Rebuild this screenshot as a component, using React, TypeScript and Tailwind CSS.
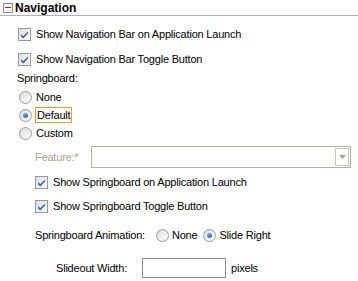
import React from "react";

function Check() {
  return (
    <div className="w-[13px] h-[13px] shrink-0 border border-[#8c9aa8] bg-gradient-to-br from-[#dcdcd7] to-white flex items-center justify-center">
      <svg width="9" height="9" viewBox="0 0 9 9">
        <path d="M1 4 L3.2 6.2 L8 1.4 L8 3.6 L3.2 8.4 L1 6.2 Z" fill="#2f5fc4" />
      </svg>
    </div>
  );
}

function Radio({ on }: { on?: boolean }) {
  return (
    <div className="w-[13px] h-[13px] shrink-0 rounded-full border border-[#9a9a9a] bg-gradient-to-br from-[#dcdcd7] to-white flex items-center justify-center">
      {on && (
        <div className="w-[5px] h-[5px] rounded-full bg-gradient-to-br from-[#7fb0f0] to-[#1f56c8]" />
      )}
    </div>
  );
}

export default function App() {
  return (
    <div
      className="w-[358px] h-[281px] bg-white text-black text-[11px] leading-[14px] tracking-[-0.2px] overflow-hidden"
      style={{ fontFamily: '"Liberation Sans", Arial, sans-serif' }}
    >
      {/* header */}
      <div className="h-[16px] border-b border-[#b0b0bc] flex items-center pl-[3px] tracking-normal">
        <div className="w-[10px] h-[10px] border border-[#8c8c8c] flex items-center justify-center bg-white">
          <div className="w-[6px] h-px bg-[#444]" />
        </div>
        <span className="ml-[2px] font-bold text-[12px]">Navigation</span>
      </div>

      <div className="mt-[11px] h-[14px] flex items-center pl-[18px] gap-[5px]">
        <Check />
        <span>Show Navigation Bar on Application Launch</span>
      </div>
      <div className="mt-[11px] h-[14px] flex items-center pl-[18px] gap-[5px]">
        <Check />
        <span>Show Navigation Bar Toggle Button</span>
      </div>

      <div className="mt-[5px] h-[14px] flex items-center pl-[17px]">Springboard:</div>

      <div className="mt-[5px] h-[14px] flex items-center pl-[19px] gap-[4px]">
        <Radio />
        <span>None</span>
      </div>
      <div className="mt-[4px] h-[14px] flex items-center pl-[19px] gap-[3px]">
        <Radio on />
        <span className="border border-[#f0a020] px-px leading-[14px]">Default</span>
      </div>
      <div className="mt-[4px] h-[14px] flex items-center pl-[19px] gap-[4px]">
        <Radio />
        <span>Custom</span>
      </div>

      <div className="mt-[6px] h-[22px] flex items-center pl-[35px]">
        <span className="text-[#a3a38f] w-[56px]">Feature:*</span>
        <div className="w-[260px] h-[22px] border border-[#b4b4a0] flex justify-end p-px">
          <div className="w-[14px] h-full border border-[#c8c8b8] flex items-center justify-center">
            <svg width="7" height="4" viewBox="0 0 7 4">
              <path d="M0 0 L7 0 L3.5 4 Z" fill="#a0a0a0" />
            </svg>
          </div>
        </div>
      </div>

      <div className="mt-[7px] h-[14px] flex items-center pl-[35px] gap-[5px]">
        <Check />
        <span>Show Springboard on Application Launch</span>
      </div>
      <div className="mt-[10px] h-[14px] flex items-center pl-[35px] gap-[5px]">
        <Check />
        <span>Show Springboard Toggle Button</span>
      </div>

      <div className="mt-[15px] h-[14px] flex items-center pl-[35px]">
        <span>Springboard Animation:</span>
        <div className="ml-[11px] flex items-center gap-[3px]">
          <Radio />
          <span>None</span>
        </div>
        <div className="ml-[6px] flex items-center gap-[3px]">
          <Radio on />
          <span>Slide Right</span>
        </div>
      </div>

      <div className="mt-[16px] h-[20px] flex items-center pl-[56px]">
        <span className="w-[86px]">Slideout Width:</span>
        <div className="w-[84px] h-[20px] border border-[#8c8c8c] bg-white" />
        <span className="ml-[5px]">pixels</span>
      </div>
    </div>
  );
}
